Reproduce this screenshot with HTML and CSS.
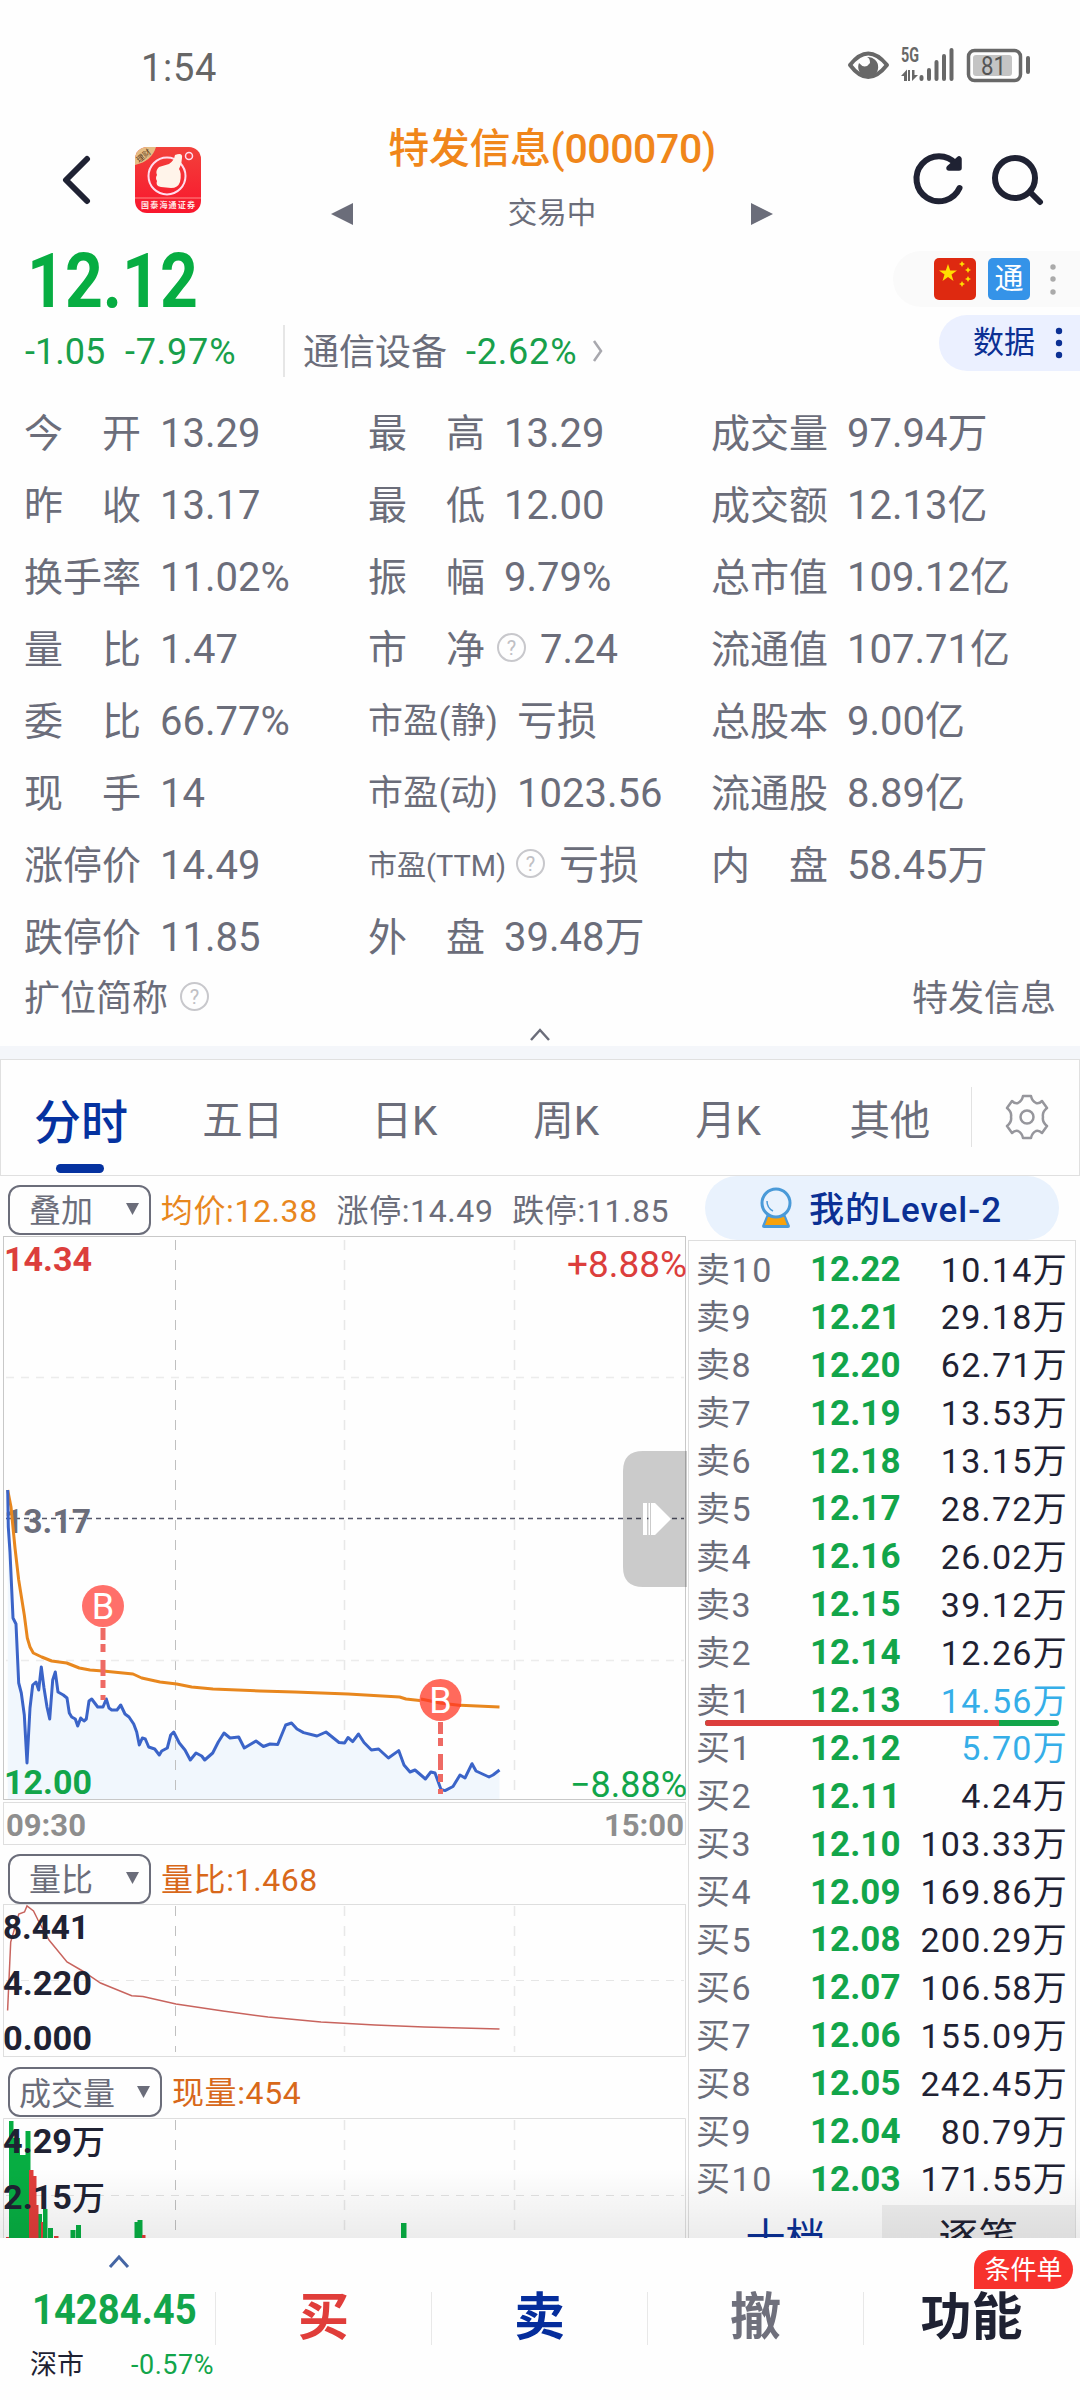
FILE: index.html
```html
<!DOCTYPE html>
<html lang="zh-CN">

<head>
  <meta charset="utf-8">
  <title>特发信息(000070)</title>
  <link rel="stylesheet" href="styles.css">
</head>

<body>
  <div class="status-bar">
    <span class="clock">1:54</span>
    <svg class="status-icons" width="184" height="40" viewBox="846 46 184 40">
      <path d="M850 65 Q868 42 887 65 Q868 89 850 65Z" fill="none" stroke="#686868" stroke-width="4" stroke-linejoin="round"/>
      <path d="M867 57 A10 10 0 1 1 859 63 Q865 70 870 63 Q870 58 867 57Z" fill="#686868"/>
      <text x="901" y="62" class="net" textLength="18" lengthAdjust="spacingAndGlyphs">5G</text>
      <path d="M901 76 L907 69.500 V81 H904 V76Z M908 70 H910 V81 H908Z M912 70 H914.500 V75 H918 L912 81Z" fill="#686868"/>
      <path d="M921.500 77 V79 M929 70 V79 M936.500 62 V79 M944 56 V79 M951.500 50 V79" stroke="#686868" stroke-width="4" stroke-linecap="round"/>
      <rect x="968.500" y="50.500" width="52" height="30" rx="6" fill="none" stroke="#686868" stroke-width="3.500"/>
      <rect x="973" y="55" width="39" height="21" rx="3" fill="#c4c4c4"/>
      <path d="M1028 58 V72" stroke="#686868" stroke-width="4" stroke-linecap="round"/>
      <text x="981" y="74.500" class="batt" textLength="25" lengthAdjust="spacingAndGlyphs">81</text>
    </svg>
  </div>

  <div class="header">
    <svg class="back" width="30" height="52" viewBox="0 0 30 52">
      <path d="M25 5 L4 26 L25 47" fill="none" stroke="#1f2233" stroke-width="6" stroke-linecap="round" stroke-linejoin="round"/>
    </svg>
    <svg class="logo" width="66" height="66" viewBox="0 0 66 66">
      <defs>
        <linearGradient id="red" x1="0" y1="0" x2="0" y2="1">
          <stop offset="0" stop-color="#f2413b"/>
          <stop offset="1" stop-color="#f9162d"/>
        </linearGradient>
        <clipPath id="round"><rect width="66" height="66" rx="12"/></clipPath>
      </defs>
      <g clip-path="url(#round)">
        <rect width="66" height="66" fill="url(#red)"/>
        <path d="M0 0 H21 Q17 14 0 18Z" fill="#e5bd84"/>
        <text x="0" y="0" class="logo-tag" transform="translate(4 16) rotate(-38)">理财</text>
        <circle cx="32" cy="29" r="18.500" fill="none" stroke="#fde" stroke-width="2"/>
        <path d="M24 20 L34 17 Q39 14 40 8 Q48 5 47 11 Q47 17 44 22 Q47 26 45 35 Q43 41 36 41 L26 40 Q20 39 22 34 Q20 31 22 28 Q20 24 24 20Z" fill="#fff4ea"/>
        <circle cx="54" cy="9" r="3.500" fill="none" stroke="#fde" stroke-width="1.500"/>
        <path d="M0 51 H66" stroke="#ff8a86" stroke-width="1"/>
        <text x="6" y="61" class="logo-name" textLength="54">国泰海通证券</text>
      </g>
    </svg>
    <div class="title">
      <div class="name">特发信息(000070)</div>
      <div class="switch">
        <svg width="22" height="22"><path d="M22 0 V22 L0 11Z" fill="#6b6d7a"/></svg>
        <span>交易中</span>
        <svg width="22" height="22"><path d="M0 0 V22 L22 11Z" fill="#6b6d7a"/></svg>
      </div>
    </div>
    <svg class="tools" width="134" height="56" viewBox="910 152 134 56">
      <path d="M959.500 188 A22.500 22.500 0 1 1 956 164" fill="none" stroke="#1f2233" stroke-width="6" stroke-linecap="round"/>
      <path d="M959 159 V168 H949Z" fill="#1f2233" stroke="#1f2233" stroke-width="5.500" stroke-linecap="round" stroke-linejoin="round"/>
      <circle cx="1015" cy="178" r="20" fill="none" stroke="#1f2233" stroke-width="6"/>
      <path d="M1030 192 L1040 202" stroke="#1f2233" stroke-width="6" stroke-linecap="round"/>
    </svg>
  </div>

  <div class="quote">
    <div class="quote-left">
      <div class="price">12.12</div>
      <div class="change">
        <span class="diff">-1.05</span>
        <span class="pct">-7.97%</span>
        <span class="sector">通信设备</span>
        <span class="pct">-2.62%</span>
        <svg width="14" height="22"><path d="M2 1 L9 11 L2 21" fill="none" stroke="#a8a8ae" stroke-width="2.500"/></svg>
      </div>
    </div>
    <div class="quote-right">
      <div class="tags">
        <svg width="42" height="42" viewBox="0 0 42 42">
          <rect width="42" height="42" rx="5" fill="#de2910"/>
          <path d="M14 6 L16.200 12.500 H23 L17.500 16.500 L19.500 23 L14 19 L8.500 23 L10.500 16.500 L5 12.500 H11.800Z" fill="#ffde00"/>
          <path d="M28 3 L29 5 L31 6 L29 7 L28 9 L27 7 L25 6 L27 5Z M34 9 L35 11 L37 12 L35 13 L34 15 L33 13 L31 12 L33 11Z M34 18 L35 20 L37 21 L35 22 L34 24 L33 22 L31 21 L33 20Z M28 23 L29 25 L31 26 L29 27 L28 29 L27 27 L25 26 L27 25Z" fill="#ffde00"/>
        </svg>
        <span class="tong">通</span>
        <svg class="dots" width="6" height="34" fill="#aaa"><circle cx="3" cy="5" r="2.700"/><circle cx="3" cy="17" r="2.700"/><circle cx="3" cy="30" r="2.700"/></svg>
      </div>
      <div class="data-btn">
        <span>数据</span>
        <svg width="8" height="34" fill="#0b3094"><circle cx="4" cy="5" r="3.200"/><circle cx="4" cy="17" r="3.200"/><circle cx="4" cy="29" r="3.200"/></svg>
      </div>
    </div>
  </div>

  <div class="stats">
    <div><span class="k">今 开</span><b>13.29</b></div>
    <div><span class="k">昨 收</span><b>13.17</b></div>
    <div><span class="k">换手率</span><b>11.02%</b></div>
    <div><span class="k">量 比</span><b>1.47</b></div>
    <div><span class="k">委 比</span><b>66.77%</b></div>
    <div><span class="k">现 手</span><b>14</b></div>
    <div><span class="k">涨停价</span><b>14.49</b></div>
    <div><span class="k">跌停价</span><b>11.85</b></div>
    <div><span class="k">最 高</span><b>13.29</b></div>
    <div><span class="k">最 低</span><b>12.00</b></div>
    <div><span class="k">振 幅</span><b>9.79%</b></div>
    <div><span class="k">市 净</span><i class="help">?</i><b>7.24</b></div>
    <div><span class="k pe">市盈(静)</span><b>亏损</b></div>
    <div><span class="k pe">市盈(动)</span><b>1023.56</b></div>
    <div><span class="k ttm">市盈(TTM)</span><i class="help">?</i><b>亏损</b></div>
    <div><span class="k">外 盘</span><b>39.48万</b></div>
    <div><span class="k">成交量</span><b>97.94万</b></div>
    <div><span class="k">成交额</span><b>12.13亿</b></div>
    <div><span class="k">总市值</span><b>109.12亿</b></div>
    <div><span class="k">流通值</span><b>107.71亿</b></div>
    <div><span class="k">总股本</span><b>9.00亿</b></div>
    <div><span class="k">流通股</span><b>8.89亿</b></div>
    <div><span class="k">内 盘</span><b>58.45万</b></div>
  </div>
  <div class="alias">
    <span>扩位简称</span><i class="help">?</i>
    <span class="alias-name">特发信息</span>
  </div>
  <div class="fold">
    <svg width="22" height="13"><path d="M2 12 L11 2 L20 12" fill="none" stroke="#6b6d7a" stroke-width="2.500"/></svg>
  </div>

  <div class="tabs">
    <span class="tab active">分时</span>
    <span class="tab">五日</span>
    <span class="tab">日K</span>
    <span class="tab">周K</span>
    <span class="tab">月K</span>
    <span class="tab">其他</span>
    <span class="gear">
      <svg width="44" height="46" viewBox="-22 -23 44 46" fill="none" stroke="#96969c" stroke-width="2.500" stroke-linejoin="round">
        <path d="M-4 -21 H4 Q5 -16 9 -14 Q12 -13 15 -16 L20 -9 Q15 -5 16 0 Q15 5 20 9 L15 16 Q12 13 9 14 Q5 16 4 21 H-4 Q-5 16 -9 14 Q-12 13 -15 16 L-20 9 Q-15 5 -16 0 Q-15 -5 -20 -9 L-15 -16 Q-12 -13 -9 -14 Q-5 -16 -4 -21Z"/>
        <circle r="6.500"/>
      </svg>
    </span>
  </div>

  <div class="main">
    <div class="charts">
      <div class="bar">
        <span class="select">叠加<svg width="13" height="12"><path d="M0 0 H13 L6.500 12Z" fill="#6b6d7a"/></svg></span>
        <span class="avg">均价:12.38</span>
        <span class="lim">涨停:14.49</span>
        <span class="lim">跌停:11.85</span>
      </div>
      <svg class="chart" width="685" height="610" viewBox="3 1236 685 610">
        <rect x="3.500" y="1236.500" width="682" height="563" fill="none" stroke="#c8c8c8"/>
        <path d="M175.500 1240 V1799" stroke="#c0c0c0" stroke-dasharray="10 10"/>
        <path d="M344.500 1240 V1799 M514.500 1240 V1799" stroke="#e8e8e8" stroke-width="1.500" stroke-dasharray="10 10"/>
        <path d="M6 1377.500 H684 M6 1660.500 H684" stroke="#ececec" stroke-width="1.500" stroke-dasharray="8 7"/>
        <path d="M7.700 1490 L8.300 1527 L10 1552 L13 1618 L16 1624 L18.700 1683 L21.300 1693 L24.300 1715 L27 1763 L30 1708 L32.700 1685 L36 1682 L38.700 1690 L41.300 1667 L44 1688 L47 1707 L49.700 1719 L52.700 1680 L55.300 1672 L58 1692 L63.300 1695 L67 1698 L69.300 1713 L71.700 1717 L75.300 1719 L77.700 1726 L80.700 1718 L84 1721 L86.300 1719 L89 1701 L91.700 1699 L94.700 1703 L97.700 1707 L103 1707 L106.300 1699 L109 1708 L111.700 1710 L117 1710 L120.700 1705 L125 1714 L129 1717 L133.700 1724 L136.700 1732 L139.300 1745 L142.300 1738 L145.300 1739 L148.700 1747 L154.700 1749 L159.300 1755 L161.700 1751 L167.300 1748 L170.700 1735 L173.700 1732 L179.300 1743 L185 1750 L190.300 1760 L196 1753 L201.700 1756 L204.700 1760 L212.700 1753 L218.300 1742 L224 1733 L230 1738 L238.700 1737 L244.300 1748 L256 1741 L263.400 1746.500 L270 1744 L277.700 1744.500 L285.700 1725 L291.500 1723 L297 1729 L303.600 1732.600 L317 1736 L326 1732 L339 1742.500 L344.600 1743 L348 1737.500 L352.700 1741.600 L358.500 1734 L364 1742.500 L371.400 1750 L378.600 1749 L388.400 1758 L398.700 1750.600 L404 1765 L410 1772 L415 1770 L425.400 1779 L430.800 1772 L435 1773 L441 1789.400 L445 1790.600 L453 1786.500 L460 1775 L465 1778 L472 1763.700 L476 1771 L489 1777 L493 1775 L499.500 1770 V1799 H7.700Z" fill="#f1f7fd"/>
        <path d="M175.500 1740 V1799" stroke="#c0c0c0" stroke-dasharray="10 10"/>
        <path d="M6 1518.500 H684" stroke="#55576a" stroke-width="1.500" stroke-dasharray="5 4"/>
        <text x="4" y="1533" class="lbl gray" textLength="87" lengthAdjust="spacingAndGlyphs">13.17</text>
        <path d="M7.700 1490 L11 1507 L15 1548 L18.700 1580 L24.300 1615 L27.300 1638 L30 1647 L33.300 1653 L41.700 1657 L51.700 1661 L66.700 1663 L79.300 1668 L90 1670 L103 1671 L133 1674 L141.700 1678 L160 1682 L176.700 1684 L191.700 1687 L213 1689 L260 1691 L294.600 1692 L348 1694 L399.600 1697 L406 1699 L428.600 1701.600 L455 1705 L499.500 1707" class="line" stroke="#e8871e"/>
        <path d="M7.700 1490 L8.300 1527 L10 1552 L13 1618 L16 1624 L18.700 1683 L21.300 1693 L24.300 1715 L27 1763 L30 1708 L32.700 1685 L36 1682 L38.700 1690 L41.300 1667 L44 1688 L47 1707 L49.700 1719 L52.700 1680 L55.300 1672 L58 1692 L63.300 1695 L67 1698 L69.300 1713 L71.700 1717 L75.300 1719 L77.700 1726 L80.700 1718 L84 1721 L86.300 1719 L89 1701 L91.700 1699 L94.700 1703 L97.700 1707 L103 1707 L106.300 1699 L109 1708 L111.700 1710 L117 1710 L120.700 1705 L125 1714 L129 1717 L133.700 1724 L136.700 1732 L139.300 1745 L142.300 1738 L145.300 1739 L148.700 1747 L154.700 1749 L159.300 1755 L161.700 1751 L167.300 1748 L170.700 1735 L173.700 1732 L179.300 1743 L185 1750 L190.300 1760 L196 1753 L201.700 1756 L204.700 1760 L212.700 1753 L218.300 1742 L224 1733 L230 1738 L238.700 1737 L244.300 1748 L256 1741 L263.400 1746.500 L270 1744 L277.700 1744.500 L285.700 1725 L291.500 1723 L297 1729 L303.600 1732.600 L317 1736 L326 1732 L339 1742.500 L344.600 1743 L348 1737.500 L352.700 1741.600 L358.500 1734 L364 1742.500 L371.400 1750 L378.600 1749 L388.400 1758 L398.700 1750.600 L404 1765 L410 1772 L415 1770 L425.400 1779 L430.800 1772 L435 1773 L441 1789.400 L445 1790.600 L453 1786.500 L460 1775 L465 1778 L472 1763.700 L476 1771 L489 1777 L493 1775 L499.500 1770" class="line" stroke="#3b64c8"/>
        <path d="M103 1628 V1700 M440.500 1722 V1794" stroke="#ee6a64" stroke-width="5" stroke-dasharray="12 4 8 8 16 4 8 7 5"/>
        <circle cx="103" cy="1606" r="21" fill="#ff706a"/>
        <circle cx="440.500" cy="1700" r="21" fill="#ff6a5c"/>
        <path d="M421 1699 L440 1703 L461 1705.500" fill="none" stroke="#fb4a24" stroke-width="3"/>
        <text x="103" y="1619" class="mark">B</text>
        <text x="440.500" y="1713" class="mark">B</text>
        <text x="4" y="1271" class="lbl red" textLength="88" lengthAdjust="spacingAndGlyphs">14.34</text>
        <text x="4" y="1794" class="lbl green" textLength="88" lengthAdjust="spacingAndGlyphs">12.00</text>
        <text x="567" y="1277" class="rate red" textLength="120" lengthAdjust="spacingAndGlyphs">+8.88%</text>
        <text x="570" y="1797" class="rate green" textLength="117" lengthAdjust="spacingAndGlyphs">−8.88%</text>
        <path d="M687 1451 H643 Q623 1451 623 1471 V1567 Q623 1587 643 1587 H687Z" fill="#000" fill-opacity=".2"/>
        <path d="M643 1503 H647 V1535 H643Z M648.500 1503 H650 V1535 H648.500Z M651 1503 H655 L671 1519 L655 1535 H651Z" fill="#fff"/>
        <rect x="3.500" y="1802.500" width="682" height="42" fill="none" stroke="#dedede"/>
        <text x="6" y="1836" class="time" textLength="80" lengthAdjust="spacingAndGlyphs">09:30</text>
        <text x="604" y="1836" class="time" textLength="80" lengthAdjust="spacingAndGlyphs">15:00</text>
      </svg>
      <div class="bar">
        <span class="select">量比<svg width="13" height="12"><path d="M0 0 H13 L6.500 12Z" fill="#6b6d7a"/></svg></span>
        <span class="ratio">量比:1.468</span>
      </div>
      <svg class="chart" width="685" height="154" viewBox="3 1904 685 154">
        <rect x="3.500" y="1904.500" width="682" height="152" fill="none" stroke="#dedede"/>
        <path d="M175.500 1906 V2052" stroke="#c0c0c0" stroke-dasharray="10 10"/>
        <path d="M344.500 1906 V2052 M514.500 1906 V2052" stroke="#e8e8e8" stroke-width="1.500" stroke-dasharray="10 10"/>
        <path d="M6 1980.500 H684" stroke="#e6e6e6" stroke-dasharray="8 7"/>
        <path d="M7.600 2010.500 L10.700 1942 L15.600 1925 L18.800 1914 L24.500 1912 L27 1906 L33.500 1911 L38 1920 L49 1940 L67 1962 L82.600 1971 L100.500 1983 L131.700 1995.700 L142.900 1996.500 L176 2004 L223 2011 L268 2017 L321 2022 L375 2025 L424 2027 L499.500 2029" fill="none" stroke="#c8645e" stroke-width="1.500"/>
        <text x="3" y="1939" class="lbl dark" textLength="86" lengthAdjust="spacingAndGlyphs">8.441</text>
        <text x="3" y="1995" class="lbl dark" textLength="89" lengthAdjust="spacingAndGlyphs">4.220</text>
        <text x="3" y="2050" class="lbl dark" textLength="89" lengthAdjust="spacingAndGlyphs">0.000</text>
      </svg>
      <div class="bar bar-vol">
        <span class="select wide">成交量<svg width="13" height="12"><path d="M0 0 H13 L6.500 12Z" fill="#6b6d7a"/></svg></span>
        <span class="ratio">现量:454</span>
      </div>
      <svg class="chart" width="685" height="122" viewBox="3 2118 685 122">
        <path d="M3.500 2240 V2118.500 H685.500 V2240" fill="none" stroke="#dedede"/>
        <path d="M175.500 2120 V2240" stroke="#c0c0c0" stroke-dasharray="10 10"/>
        <path d="M344.500 2120 V2240 M514.500 2120 V2240" stroke="#e8e8e8" stroke-width="1.500" stroke-dasharray="10 10"/>
        <path d="M6 2195.500 H684" stroke="#e2e2e2" stroke-dasharray="8 7"/>
        <path d="M9 2121 H13.500 V2138 H20 V2155 H25.500 V2131 H30.500 V2240 H9Z M38 2214 H42 V2240 H38Z M43 2209 H47.500 V2240 H43Z M48 2228 H53 V2240 H48Z M70.500 2230 H75.500 V2240 H70.500Z M76 2225 H81 V2240 H76Z M134.500 2222 H137.500 V2220 H142.500 V2240 H134.500Z M401 2223 H406.500 V2240 H401Z" fill="#07ad42"/>
        <path d="M29 2170 H33.500 V2176 H36.500 V2205 H38.500 V2240 H29Z M41 2222 H43 V2240 H41Z M54 2236 H58.500 V2240 H54Z M142 2235 H145.500 V2240 H142Z M6 2237 H9 V2240 H6Z" fill="#e03d3a"/>
        <text x="3" y="2153" class="lbl dark" textLength="69" lengthAdjust="spacingAndGlyphs">4.29</text>
        <text x="72" y="2154" class="wan">万</text>
        <text x="3" y="2209" class="lbl dark" textLength="69" lengthAdjust="spacingAndGlyphs">2.15</text>
        <text x="72" y="2210" class="wan">万</text>
      </svg>
    </div>

    <div class="book">
      <div class="level2">
        <svg width="32" height="42" viewBox="760 1187 32 42">
          <path d="M767 1214 H785 L790 1226 Q790 1228 788 1228 H764 Q762 1228 762 1226Z" fill="#4a9ad8"/>
          <path d="M768 1217 H784 L787 1225 H765Z" fill="#f8a20c"/>
          <circle cx="776" cy="1203" r="14" fill="#e9f2fd" stroke="#4a9ad8" stroke-width="3"/>
          <path d="M767 1201 Q767 1208 773 1211" fill="none" stroke="#4a9ad8" stroke-width="1.500"/>
        </svg>
        <span>我的Level-2</span>
      </div>
      <div class="orders">
        <div class="row"><span>卖10</span><b>12.22</b><em>10.14万</em></div>
        <div class="row"><span>卖9</span><b>12.21</b><em>29.18万</em></div>
        <div class="row"><span>卖8</span><b>12.20</b><em>62.71万</em></div>
        <div class="row"><span>卖7</span><b>12.19</b><em>13.53万</em></div>
        <div class="row"><span>卖6</span><b>12.18</b><em>13.15万</em></div>
        <div class="row"><span>卖5</span><b>12.17</b><em>28.72万</em></div>
        <div class="row"><span>卖4</span><b>12.16</b><em>26.02万</em></div>
        <div class="row"><span>卖3</span><b>12.15</b><em>39.12万</em></div>
        <div class="row"><span>卖2</span><b>12.14</b><em>12.26万</em></div>
        <div class="row"><span>卖1</span><b>12.13</b><em class="hot">14.56万</em></div>
        <div class="split"><i></i></div>
        <div class="row"><span>买1</span><b>12.12</b><em class="hot">5.70万</em></div>
        <div class="row"><span>买2</span><b>12.11</b><em>4.24万</em></div>
        <div class="row"><span>买3</span><b>12.10</b><em>103.33万</em></div>
        <div class="row"><span>买4</span><b>12.09</b><em>169.86万</em></div>
        <div class="row"><span>买5</span><b>12.08</b><em>200.29万</em></div>
        <div class="row"><span>买6</span><b>12.07</b><em>106.58万</em></div>
        <div class="row"><span>买7</span><b>12.06</b><em>155.09万</em></div>
        <div class="row"><span>买8</span><b>12.05</b><em>242.45万</em></div>
        <div class="row"><span>买9</span><b>12.04</b><em>80.79万</em></div>
        <div class="row"><span>买10</span><b>12.03</b><em>171.55万</em></div>
        <div class="book-tabs"><span class="on">十档</span><span>逐笔</span></div>
      </div>
    </div>
    <div class="shade"></div>
  </div>

  <div class="footer">
    <div class="index">
      <svg width="22" height="14"><path d="M2 13 L11 3 L20 13" fill="none" stroke="#4566a4" stroke-width="3"/></svg>
      <div class="index-val">14284.45</div>
      <div class="index-sub"><span>深市</span><em>-0.57%</em></div>
    </div>
    <div class="act buy">买</div>
    <div class="act sell">卖</div>
    <div class="act cancel">撤</div>
    <div class="act more">功能<span class="badge">条件单</span></div>
  </div>
</body>

</html>
```
FILE: styles.css
```css
* {
  box-sizing: border-box;
}

body {
  margin: 0;
  width: 1080px;
  height: 2400px;
  overflow: hidden;
  background-color: #fefefe;
  color: #6b6d7a;
  font-family: Roboto, "Noto Sans CJK SC", sans-serif;
  line-height: 1.2;
  display: flex;
  flex-direction: column;
}

b, em, i {
  font-weight: normal;
  font-style: normal;
}

svg {
  display: block;
  flex: none;
}

span, b, em {
  white-space: nowrap;
}

/* status bar */
.status-bar {
  height: 112px;
  flex: none;
  display: flex;
  justify-content: space-between;
  align-items: flex-start;
  padding: 46px 50px 0 141px;
}

.status-icons {
  overflow: visible;
}

.clock {
  font-size: 38px;
  line-height: 44px;
  letter-spacing: 0.7px;
  color: #666;
}

.net {
  font-size: 20px;
  font-weight: bold;
  fill: #686868;
}

.batt {
  font-size: 25px;
  fill: #555;
}

/* header */
.header {
  height: 132px;
  flex: none;
  display: flex;
  align-items: flex-start;
}

.back {
  margin: 42px 0 0 62px;
}

.logo {
  margin: 35px 0 0 43px;
}

.logo-tag {
  font-size: 8px;
  fill: #5a3a1c;
}

.logo-name {
  font-size: 8px;
  font-weight: bold;
  fill: #ffe6e4;
}

.title {
  width: 442px;
  margin: 9px 0 0 130px;
}

.name {
  font-size: 41px;
  line-height: 56px;
  font-weight: 500;
  text-align: center;
  color: #f0861a;
  letter-spacing: -0.4px;
}

.switch {
  display: flex;
  justify-content: space-between;
  align-items: center;
  height: 44px;
  margin-top: 15px;
  font-size: 29.5px;
}

.tools {
  margin: 40px 0 0 137px;
}

/* quote */
.quote {
  height: 153px;
  flex: none;
  display: flex;
  justify-content: space-between;
}

.price {
  height: 72px;
  margin: 1px 0 0 27px;
  font-size: 76px;
  line-height: 72px;
  font-weight: bold;
  color: #07ad42;
  transform: scaleX(0.87);
  transform-origin: 0 0;
}

.change {
  display: flex;
  align-items: center;
  height: 52px;
  margin-top: 8px;
  padding-left: 25px;
  font-size: 36px;
  color: #18a04b;
}

.diff, .pct {
  padding-top: 3px;
}

.diff {
  width: 100px;
}

.pct {
  width: 126px;
  letter-spacing: 0.8px;
}

.sector {
  width: 183px;
  height: 52px;
  margin-left: 32px;
  padding-left: 18px;
  line-height: 56px;
  border-left: 2px solid #e6e6e6;
  color: #6b6d7a;
}

.tags {
  display: flex;
  align-items: center;
  gap: 12px;
  width: 187px;
  height: 56px;
  margin-top: 7px;
  padding-left: 41px;
  border-radius: 28px 0 0 28px;
  background-color: #fafafa;
}

.tong {
  width: 42px;
  height: 42px;
  border-radius: 5px;
  font-size: 29px;
  line-height: 42px;
  text-align: center;
  color: #fff;
  background-color: #3593e8;
}

.dots {
  margin-left: 8px;
}

.data-btn {
  display: flex;
  align-items: center;
  gap: 20px;
  width: 141px;
  height: 56px;
  margin: 8px 0 0 46px;
  padding-left: 34px;
  border-radius: 28px 0 0 28px;
  font-size: 31px;
  line-height: 56px;
  color: #0b3094;
  background-color: #ebf0ff;
}

/* figures */
.stats {
  flex: none;
  display: grid;
  grid-auto-flow: column;
  grid-template-rows: repeat(8, 72px);
  grid-template-columns: 344px 343px 343px;
  padding-left: 24px;
}

.stats div {
  display: flex;
  align-items: center;
}

.stats b {
  font-size: 40px;
  margin-left: 19px;
  padding-top: 2px;
}

.k {
  width: 117px;
  padding-top: 2px;
  font-size: 39px;
  text-align-last: justify;
}

.pe {
  width: 130px;
  font-size: 35px;
}

.ttm {
  width: 136px;
  font-size: 29px;
}

.help {
  width: 29px;
  height: 29px;
  margin-left: 12px;
  border: 2px solid #c8c8cc;
  border-radius: 50%;
  font-size: 20px;
  line-height: 26px;
  text-align: center;
  color: #c0c0c4;
}

.stats .help {
  margin-top: -4px;
}

.stats .help + b {
  margin-left: 14px;
}

.alias {
  display: flex;
  align-items: center;
  flex: none;
  height: 49px;
  padding: 5px 24px 0;
  font-size: 36px;
}

.alias .help {
  margin-top: -7px;
}

.alias-name {
  margin-left: auto;
}

.fold {
  flex: none;
  display: flex;
  justify-content: center;
  height: 24px;
  padding-top: 6px;
}

/* period tabs */
.tabs {
  flex: none;
  display: flex;
  height: 130px;
  border-top: 13px solid #f4f6fa;
  box-shadow: inset 0 0 0 1px #e0e0e0;
}

.tab {
  position: relative;
  width: 161.8px;
  font-size: 40.5px;
  line-height: 125px;
  text-align: center;
}

.active {
  font-size: 47px;
  font-weight: 500;
  line-height: 127px;
  color: #0532a0;
}

.active::after {
  content: "";
  position: absolute;
  left: 56px;
  top: 105px;
  width: 48px;
  height: 9px;
  border-radius: 5px;
  background-color: #0532a0;
}

.gear {
  display: flex;
  align-items: center;
  height: 60px;
  margin-top: 28px;
  padding-left: 33px;
  border-left: 1px solid #e2e2e2;
}

/* charts */
.main {
  position: relative;
  flex: none;
  display: flex;
  height: 1062px;
  overflow: hidden;
}

.charts {
  width: 688px;
  padding-left: 3px;
}

.bar {
  display: flex;
  align-items: center;
  height: 60px;
  padding: 7px 0 0 5px;
  font-size: 32px;
  line-height: 54px;
  letter-spacing: 0.6px;
}

.chart + .bar {
  height: 58px;
}

.chart + .bar-vol {
  height: 60px;
  padding-top: 8px;
}

.select {
  display: flex;
  justify-content: space-between;
  align-items: center;
  width: 143px;
  height: 50px;
  margin-right: 10px;
  padding: 3px 10px 0 19px;
  border: 2px solid #6b6d7a;
  border-radius: 12px;
  letter-spacing: 0;
}

.select svg {
  margin-bottom: 4px;
}

.wide {
  width: 154px;
  padding-left: 9px;
}

.avg, .lim {
  width: 176px;
  padding-top: 3px;
}

.avg {
  color: #e8871e;
}

.ratio {
  padding-top: 2px;
  color: #d8681a;
}

.lbl {
  font-size: 34px;
  font-weight: bold;
}

.rate {
  font-size: 36px;
}

.time {
  font-size: 31px;
  font-weight: bold;
  fill: #8e8e8e;
}

.wan {
  font-size: 33px;
  font-weight: 500;
  fill: #1f2233;
}

.mark {
  font-size: 36px;
  fill: #fff;
  text-anchor: middle;
}

.line {
  fill: none;
  stroke-width: 3;
  stroke-linejoin: round;
}

.red {
  fill: #dc3e3c;
}

.green {
  fill: #12a54a;
}

.gray {
  fill: #6b6d7a;
}

.dark {
  fill: #1f2233;
}

/* order book */
.book {
  width: 388px;
}

.level2 {
  display: flex;
  align-items: center;
  gap: 17px;
  width: 354px;
  height: 64px;
  margin-left: 17px;
  padding-left: 55px;
  border-radius: 32px;
  font-size: 35px;
  line-height: 64px;
  font-weight: 500;
  letter-spacing: 1px;
  color: #0b3094;
  background-color: #e9f2fd;
}

.level2 span {
  padding-top: 5px;
}

.orders {
  height: 1000px;
  padding-top: 3px;
  border: 1px solid #dedede;
}

.row {
  display: flex;
  align-items: center;
  height: 47.9px;
  padding: 4px 7px 0 7px;
  font-size: 34px;
}

.row span {
  width: 114px;
  letter-spacing: 1.6px;
}

.row b {
  font-size: 35px;
  font-weight: bold;
  color: #12a54a;
}

.row em {
  margin-left: auto;
  letter-spacing: 1.3px;
  color: #1f2233;
}

.row .hot {
  color: #35aee8;
}

.split {
  height: 6px;
  margin: -3px 16px;
  border-radius: 3px;
  background-color: #12a54a;
}

.split i {
  display: block;
  width: 83%;
  height: 6px;
  border-radius: 3px 0 0 3px;
  background-color: #dc3e3c;
}

.book-tabs {
  display: flex;
  height: 60px;
  margin-top: 3px;
  font-size: 40px;
  line-height: 68px;
  text-align: center;
  color: #1f2233;
}

.book-tabs span {
  width: 50%;
  background-color: #eee;
}

.book-tabs .on {
  color: #0b3094;
  background-color: transparent;
}

.shade {
  position: absolute;
  left: 0;
  right: 0;
  bottom: 0;
  height: 70px;
  background: linear-gradient(rgba(0, 0, 0, 0), rgba(0, 0, 0, 0.07));
}

/* bottom bar */
.footer {
  flex: none;
  display: flex;
  height: 162px;
}

.index {
  width: 215px;
}

.index svg {
  margin: 16px 0 0 108px;
}

.index-val {
  height: 56px;
  margin: 14px 0 0 32px;
  font-size: 42px;
  line-height: 56px;
  font-weight: bold;
  color: #12a54a;
  transform: scaleX(0.91);
  transform-origin: 0 0;
}

.index-sub {
  display: flex;
  justify-content: space-between;
  margin-top: 8px;
  padding: 0 1px 0 30px;
  font-size: 27px;
  line-height: 38px;
  color: #1f2233;
}

.index-sub em {
  color: #12a54a;
  letter-spacing: 0.5px;
}

.act {
  position: relative;
  width: 216px;
  height: 53px;
  margin-top: 54px;
  font-size: 51px;
  line-height: 51px;
  font-weight: bold;
  text-align: center;
  border-left: 1px solid #e8e8e8;
}

.buy {
  color: #e03d3a;
}

.sell {
  color: #052d9c;
}

.cancel {
  color: #6f707c;
}

.more {
  color: #1f2233;
}

.badge {
  position: absolute;
  top: -42px;
  right: 6px;
  width: 99px;
  height: 39px;
  border-radius: 18px 20px 20px 0;
  font-size: 26px;
  font-weight: normal;
  line-height: 40px;
  color: #fff;
  background-color: #f7322d;
}
```
